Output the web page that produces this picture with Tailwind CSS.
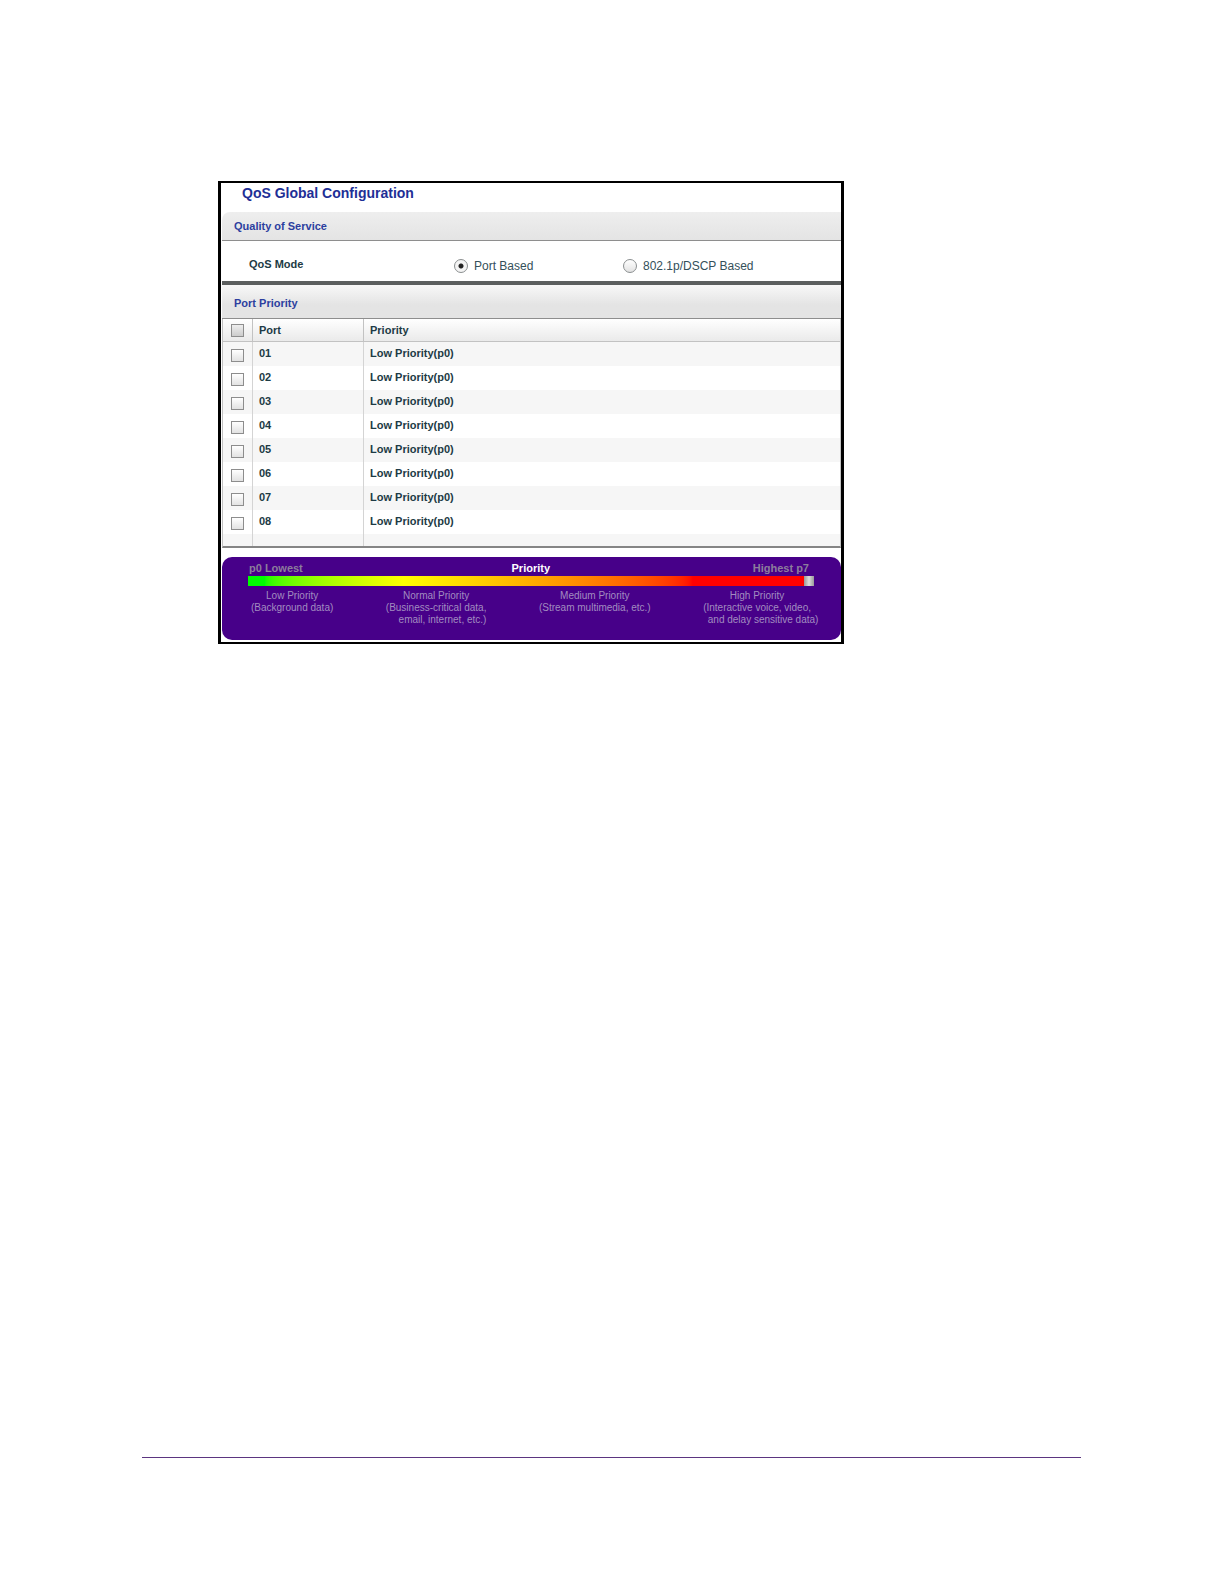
<!DOCTYPE html>
<html lang="en">
<head>
<meta charset="utf-8">
<meta name="viewport" content="width=device-width, initial-scale=1">
<title>QoS Global Configuration</title>
<script src="https://cdn.jsdelivr.net/npm/@tailwindcss/browser@4"></script>
</head>
<body class="bg-white font-['Liberation_Sans',Arial,sans-serif] text-[11px] text-[#1d3b45]">
<div class="flex min-h-screen flex-col">
  <main class="pt-[181px] pr-[380px] pl-[218px]">
    <div class="border-x-3 border-y-2 border-black bg-white pb-0.5 pl-px">
      <h1 class="flex h-[29px] items-start pt-px pl-5 text-sm leading-[18px] font-bold text-[#1e2f96]">QoS Global Configuration</h1>

      <section>
        <h2 class="flex h-[29px] items-center rounded-tl-lg border-b border-[#8e8e8e] bg-linear-to-b from-[#eeeeee] to-[#e4e4e4] pl-3 font-bold text-[#2c3f9f]">Quality of Service</h2>
        <div role="radiogroup" aria-labelledby="mode-label" class="flex h-11 items-center border-b-4 border-[#5c5f5f] pt-1.5 pl-[27px]">
          <span id="mode-label" class="w-[205px] font-bold">QoS Mode</span>
          <label class="flex w-[169px] items-center gap-1.5 pt-1 text-xs text-[#34505a]">
            <input type="radio" name="mode" checked class="size-3.5 appearance-none rounded-full border border-[#8b8f90] bg-[#f2f2f2] checked:bg-[radial-gradient(circle,#222_0_2px,#f4f4f4_3px)]">Port Based
          </label>
          <label class="flex items-center gap-1.5 pt-1 text-xs text-[#34505a]">
            <input type="radio" name="mode" class="size-3.5 appearance-none rounded-full border border-[#8b8f90] bg-linear-to-b from-white to-[#e2e2e2] checked:bg-[radial-gradient(circle,#222_0_2px,#f4f4f4_3px)]">802.1p/DSCP Based
          </label>
        </div>
      </section>

      <section>
        <h2 class="flex h-[34px] items-center border-b border-[#8e8e8e] bg-linear-to-b from-[#f8f8f8] to-[#e4e4e4] to-60% pt-1 pl-3 font-bold text-[#2c3f9f]">Port Priority</h2>
        <table class="w-full table-fixed border-separate border-spacing-0 border-x border-b-2 border-x-[#c2c2c2] border-b-[#858585] text-left font-bold">
          <colgroup><col class="w-[30px]"><col class="w-[111px]"><col></colgroup>
          <thead>
            <tr class="h-[23px] bg-linear-to-b from-white to-[#e9e9e9]">
              <th class="border-r border-b border-[#c2c2c2] p-0 pl-2"><input type="checkbox" aria-label="Select all ports" class="block size-[13px] appearance-none border border-[#8d8d8d] bg-linear-to-b from-[#eee] to-[#ccc] checked:bg-[#555]"></th>
              <th class="border-r border-b border-[#c2c2c2] p-0 pl-1.5">Port</th>
              <th class="border-b border-[#c2c2c2] p-0 pl-1.5">Priority</th>
            </tr>
          </thead>
          <tbody id="ports"></tbody>
        </table>
      </section>

      <section class="mt-[9px] h-[83px] rounded-[10px] bg-[#470089] pt-1">
        <div class="flex justify-between pr-8 pl-[27px] font-bold leading-[15px] text-[#8c7d9c]">
          <span>p0 Lowest</span><span class="pl-1.5 text-white">Priority</span><span>Highest p7</span>
        </div>
        <div class="mr-[27px] ml-[26px] flex h-2.5">
          <div class="grow bg-linear-to-r from-[#00ff00] from-3% via-[#ffff00] via-28% to-[#ff0000] to-80%"></div>
          <div class="w-2.5 bg-linear-to-r from-[#999] via-[#ddd] to-[#999]"></div>
        </div>
        <div class="flex justify-between pt-1 pr-[18px] pl-[29px] text-center text-[10px] leading-3 whitespace-nowrap text-[#a28cc0]">
          <p>Low Priority<br>(Background data)</p>
          <p>Normal Priority<br>(Business-critical data,<span class="block text-right">email, internet, etc.)</span></p>
          <p>Medium Priority<br>(Stream multimedia, etc.)</p>
          <p><span class="block pr-3">High Priority<br>(Interactive voice, video,</span>and delay sensitive data)</p>
        </div>
      </section>
    </div>
  </main>
  <hr class="mt-auto mr-[143px] mb-[126px] ml-[142px] border-t border-[#5b3580]">
</div>
<script>
  const row = n => `<tr class="h-6 odd:bg-[#f6f6f6]">
    <td class="border-r border-[#d4d4d4] p-0 pt-0.5 pl-2"><input type="checkbox" aria-label="Select port ${n}" class="block size-[13px] appearance-none border border-[#8d8d8d] bg-linear-to-b from-white to-[#e2e2e2] checked:bg-[#555]"></td>
    <td class="border-r border-[#d4d4d4] p-0 pb-px pl-1.5">${n}</td>
    <td class="p-0 pb-px pl-1.5">Low Priority(p0)</td></tr>`;
  const spacer = `<tr class="h-3 bg-[#f6f6f6]"><td class="border-r border-[#d4d4d4] p-0"></td><td class="border-r border-[#d4d4d4] p-0"></td><td class="p-0"></td></tr>`;
  document.getElementById('ports').innerHTML =
    ['01','02','03','04','05','06','07','08'].map(row).join('') + spacer;
</script>
</body>
</html>
